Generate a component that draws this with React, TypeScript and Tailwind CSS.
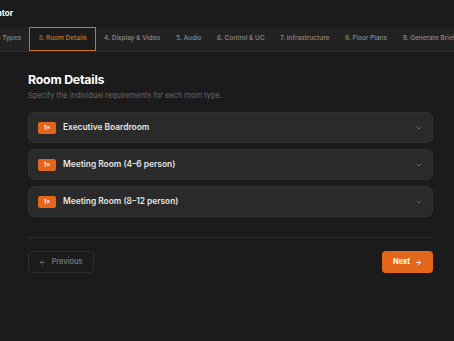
import React from "react";

const hiddenTabs = ["1. Project Info", "2. Room Types"];
const tabs = [
  "3. Room Details",
  "4. Display & Video",
  "5. Audio",
  "6. Control & UC",
  "7. Infrastructure",
  "8. Floor Plans",
  "9. Generate Brief",
];

const rooms = ["Executive Boardroom", "Meeting Room (4–6 person)", "Meeting Room (8–12 person)"];

function Chevron() {
  return (
    <svg width="8" height="8" viewBox="0 0 24 24" fill="none" stroke="#6b6b6b" strokeWidth="3" strokeLinecap="round" strokeLinejoin="round">
      <path d="m6 9 6 6 6-6" />
    </svg>
  );
}

function Tab({ t }: { t: string }) {
  const active = t === "3. Room Details";
  return (
    <div
      className={
        active
          ? "shrink-0 flex items-center px-[8.5px] h-full border border-[#d0702e] bg-[#1c1c1c] text-[#e0691f] text-[6.5px] font-medium"
          : "shrink-0 flex items-center px-[6.8px] h-full border border-transparent text-[#8c8c8c] text-[6.5px] font-medium"
      }
    >
      {t}
    </div>
  );
}

export default function App() {
  return (
    <div
      className="w-[454px] h-[341px] overflow-hidden bg-[#1b1b1b] text-white"
      style={{ fontFamily: "Inter, 'Noto Sans', sans-serif" }}
    >
      <div className="h-[27px] flex items-center overflow-hidden">
        <div className="w-[13px] shrink-0 flex justify-end">
          <div className="shrink-0 whitespace-nowrap text-[8.2px] font-bold text-white">AV Brief Generator</div>
        </div>
      </div>
      <div className="h-[25px] bg-[#222222] border-b border-[#2c2c2c] overflow-hidden flex whitespace-nowrap">
        <div className="w-[29px] shrink-0 flex justify-end h-full">
          {hiddenTabs.map((t) => (
            <Tab key={t} t={t} />
          ))}
        </div>
        {tabs.map((t) => (
          <Tab key={t} t={t} />
        ))}
      </div>
      <div className="px-[28px] pt-[19px] w-[461px]">
        <div className="text-[12.3px] font-bold leading-[18px] tracking-[-0.2px]">Room Details</div>
        <div className="mt-[2px] text-[7.4px] text-[#6a6a6a] leading-[10px]">Specify the individual requirements for each room type.</div>
        <div className="mt-[11px] flex flex-col gap-[6px]">
          {rooms.map((r) => (
            <div
              key={r}
              className="h-[31px] rounded-[6px] bg-[#2a2a2a] border border-[#303030] flex items-center pl-[9px] pr-[9px]"
            >
              <div className="w-[18px] h-[12px] rounded-[2px] bg-[#e4661a] flex items-center justify-center text-[6px] font-bold text-white leading-none">
                1×
              </div>
              <div className="ml-[7px] text-[8.4px] font-semibold text-[#e6e6e6]">{r}</div>
              <div className="ml-auto flex items-center">
                <Chevron />
              </div>
            </div>
          ))}
        </div>
        <div className="mt-[20px] h-px bg-[#2c2c2c]" />
        <div className="mt-[13px] flex justify-between items-center">
          <div className="h-[22px] w-[66px] rounded-[4px] border border-[#2e2e2e] flex items-center justify-center gap-[5px] text-[#777777] text-[7.4px] font-semibold">
            <svg width="7" height="7" viewBox="0 0 24 24" fill="none" stroke="#7a7a7a" strokeWidth="2.5" strokeLinecap="round" strokeLinejoin="round">
              <path d="M19 12H5" />
              <path d="m12 19-7-7 7-7" />
            </svg>
            Previous
          </div>
          <div className="h-[22px] w-[51px] rounded-[4px] bg-[#e4661a] flex items-center justify-center gap-[5px] text-white text-[7.4px] font-bold">
            Next
            <svg width="7" height="7" viewBox="0 0 24 24" fill="none" stroke="#ffffff" strokeWidth="2.8" strokeLinecap="round" strokeLinejoin="round">
              <path d="M5 12h14" />
              <path d="m12 5 7 7-7 7" />
            </svg>
          </div>
        </div>
      </div>
    </div>
  );
}
